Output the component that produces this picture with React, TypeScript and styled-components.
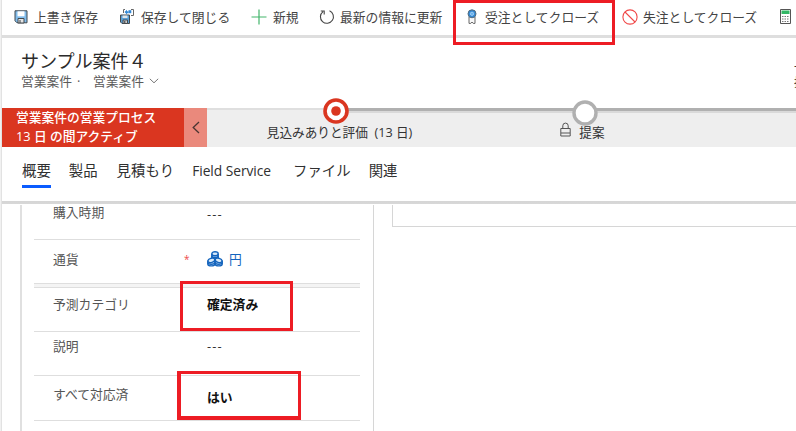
import React from 'react';
import styled, { createGlobalStyle } from 'styled-components';

const GlobalStyle = createGlobalStyle`
  * { box-sizing: border-box; }
  body {
    margin: 0;
    overflow: hidden;
    background: #fff;
    color: #333;
    font-family: "Open Sans", "Noto Sans CJK JP", sans-serif;
  }
`;

const Page = styled.div`
  position: relative;
  width: 796px;
  height: 431px;
  overflow: hidden;
  display: flex;
  flex-direction: column;
  padding-left: 2px;
  background: linear-gradient(90deg, #f1f1f1 0 1px, #e2e2e2 1px 2px, #fff 2px);
`;

const Toolbar = styled.div`
  display: flex;
  flex: none;
  height: 38px;
  padding-left: 12px;
  border-bottom: 3px solid #dedede;
`;

const Command = styled.div<{ $width: number; $gap: number }>`
  display: flex;
  flex: none;
  align-items: center;
  width: ${(p) => p.$width}px;
  height: 33px;
  gap: ${(p) => p.$gap}px;
  font-size: 12.8px;
  line-height: 18px;
  white-space: nowrap;
  color: #444;
  svg { flex: none; display: block; }
`;

const Header = styled.div`
  display: flex;
  flex: none;
  justify-content: space-between;
  height: 70px;
  padding: 11px 0 0 19px;
`;

const Title = styled.div`
  height: 24px;
  font-size: 18.1px;
  line-height: 24px;
  letter-spacing: -0.1px;
  white-space: nowrap;
  color: #2b2b2b;
`;

const Subtitle = styled.div`
  display: flex;
  align-items: center;
  height: 16px;
  font-size: 12.75px;
  line-height: 16px;
  white-space: nowrap;
  color: #5a5a5a;
  svg { margin-left: 5px; }
`;

const Dot = styled.span`
  width: 21px;
  padding-left: 5px;
`;

const ClippedText = styled.div`
  width: 2px;
  height: 32px;
  margin-top: 8px;
  overflow: hidden;
  font-size: 12px;
  line-height: 17px;
  white-space: nowrap;
`;

const Process = styled.div`
  display: flex;
  flex: none;
  height: 39px;
  background: #eee;
`;

const ProcessName = styled.div`
  flex: none;
  width: 182px;
  padding: 0 0 0 14px;
  background: #da3620;
  color: #fff;
  font-size: 12.75px;
  font-weight: 500;
  line-height: 19px;
  white-space: nowrap;
`;

const Collapse = styled.div`
  display: flex;
  flex: none;
  align-items: center;
  justify-content: center;
  width: 23px;
  background: #ea897c;
`;

const Stages = styled.div`
  flex: 1;
  display: flex;
  border-top: 2px solid #dfdfdf;
`;

const Stage = styled.div<{ $width: number; $tail?: number }>`
  position: relative;
  flex: none;
  display: flex;
  justify-content: center;
  width: ${(p) => p.$width}px;
  padding-top: 12px;
  font-size: 12.65px;
  line-height: 20px;
  white-space: nowrap;
  color: #333;
  &::after {
    content: "";
    position: absolute;
    top: -2px;
    left: 50%;
    width: ${(p) => p.$tail ?? 0}px;
    height: 5px;
    background: linear-gradient(#b0b0b0 0 3px, #d9d9d9 3px);
  }
`;

const StageMark = styled.svg<{ $top: number }>`
  position: absolute;
  z-index: 1;
  top: ${(p) => p.$top}px;
  left: 50%;
  margin-left: -13px;
`;

const StageText = styled.span<{ $gap?: number; $shift?: number }>`
  display: flex;
  gap: ${(p) => p.$gap ?? 0}px;
  height: 20px;
  transform: translateX(${(p) => p.$shift ?? 0}px);
`;

const Tabs = styled.div`
  display: flex;
  flex: none;
  height: 57px;
  padding: 13px 0 0 20px;
  border: solid transparent;
  border-width: 0 0 3px;
  border-image: linear-gradient(#ababab, #d8d8d8) 3;
`;

const Tab = styled.div<{ $gap: number; $active?: boolean; $tracking?: number }>`
  height: 28px;
  margin-right: ${(p) => p.$gap}px;
  border-bottom: ${(p) => (p.$active ? '3px solid #0b5cff' : 'none')};
  font-size: ${(p) => (p.$tracking ? 13.8 : 14.4)}px;
  line-height: 22px;
  letter-spacing: ${(p) => p.$tracking ?? 0}px;
  white-space: nowrap;
  color: #303030;
`;

const Content = styled.div`
  display: flex;
  flex: 1;
  align-items: flex-start;
  padding: 1px 0 0 18px;
`;

const Card = styled.div`
  width: 354px;
  height: 226px;
  padding: 0 13px 0 12px;
  border-left: 2px solid #e0e0e0;
  border-right: 1px solid #d6d6d6;
`;

const SidePanel = styled.div`
  flex: 1;
  height: 22px;
  margin-left: 18px;
  border-left: 1px solid #d6d6d6;
  border-bottom: 1px solid #d6d6d6;
`;

const Row = styled.div<{ $height: number; $top: number }>`
  display: grid;
  grid-template-columns: 131px 23px 1fr;
  height: ${(p) => p.$height}px;
  padding: ${(p) => p.$top}px 0 0 19px;
  border-bottom: 1px solid #dedede;
  font-size: 12.8px;
  line-height: 18px;
  white-space: nowrap;
  color: #555;
`;

const SectionGap = styled.div`
  height: 4px;
  background: #f4f4f4;
  border-bottom: 1px solid #dedede;
`;

const Label = styled.span<{ $lift?: number }>`
  margin-top: ${(p) => -(p.$lift ?? 0)}px;
`;

const Required = styled.span`
  color: #ed4949;
  font-size: 10px;
`;

const Value = styled.span<{ $strong?: boolean; $drop?: number; $tracking?: number }>`
  display: flex;
  align-items: center;
  gap: 6px;
  height: 18px;
  margin-top: ${(p) => p.$drop ?? 0}px;
  font-weight: ${(p) => (p.$strong ? 700 : 400)};
  letter-spacing: ${(p) => p.$tracking ?? 0}px;
  color: ${(p) => (p.$strong ? '#111' : '#333')};
`;

const Lookup = styled(Value)`
  color: #1464bd;
`;

const Highlight = styled.div<{ $x: number; $y: number; $w: number; $h: number; $edge?: string }>`
  position: absolute;
  z-index: 2;
  left: ${(p) => p.$x}px;
  top: ${(p) => p.$y}px;
  width: ${(p) => p.$w}px;
  height: ${(p) => p.$h}px;
  border: solid #ed1c24;
  border-width: ${(p) => p.$edge ?? '3px'};
`;

const SaveIcon = () => (
  <svg width="14" height="14" viewBox="0 0 14 14">
    <path d="M1 .8h12v12H3l-2-2z" fill="#82bdec" stroke="#41494f" />
    <path d="M3.500 1.300h7v5h-7z" fill="#fff" />
    <path d="M4 8.500h6V13H4z" fill="#e5e5e5" stroke="#41494f" />
    <path d="M6 10v3" stroke="#41494f" />
  </svg>
);

const SaveCloseIcon = () => (
  <svg width="16" height="17" viewBox="0 0 16 17">
    <path d="M6 1.500H4.500V5M12 1.500h2.500v6H12" fill="none" stroke="#666" />
    <path d="M5.500 4 8 1.800v1.400h1.500v2H8v1.400z" fill="#3288d5" />
    <path d="M9.500 2.200h2.800v3H9.500z" fill="#3288d5" />
    <path d="M1.500 7h9v8.500H3L1.500 14z" fill="#5a9fd5" stroke="#454b50" />
    <path d="M3.500 7.500h5V10h-5z" fill="#dfe5e9" />
    <path d="M4 12h4.500v3.500H4z" fill="#ccc" stroke="#454b50" />
    <path d="M5.800 13v2" stroke="#333" />
  </svg>
);

const PlusIcon = () => (
  <svg width="16" height="16" viewBox="0 0 16 16">
    <path d="M8 .5v15M.5 8h15" stroke="#43b56b" strokeWidth="1.200" />
  </svg>
);

const RefreshIcon = () => (
  <svg width="16" height="16" viewBox="0 0 16 16" fill="none" stroke="#454545" strokeWidth="1.100">
    <path d="M10.500 1.800a6.500 6.500 0 1 1-6.500.8M1.800 2h3.400v3.400" />
  </svg>
);

const AwardIcon = () => (
  <svg width="10" height="15" viewBox="0 0 10 15">
    <path d="M2 8v6.400h1.800L5 13l1.200 1.400H8V8" fill="#f8f8f8" stroke="#666" />
    <circle cx="5" cy="4.800" r="4" fill="#3288d5" stroke="#536b7c" />
    <circle cx="5" cy="4.800" r="1.700" fill="#68b2ef" stroke="#b9daf5" strokeWidth=".7" />
  </svg>
);

const BlockIcon = () => (
  <svg width="16" height="16" viewBox="0 0 16 16" fill="none" stroke="#f04848" strokeWidth="1.100">
    <circle cx="8" cy="8" r="7.100" />
    <path d="m3 3 10 10" />
  </svg>
);

const CalculatorIcon = () => (
  <svg width="11" height="15" viewBox="0 0 11 15">
    <path d="M.5.500h10v14H.500z" fill="#fff" stroke="#555" />
    <path d="M1.500 1.500h8v3.500h-8z" fill="#32b765" />
    <path d="M2 7.500h7M2 10h7M2 12.500h7" stroke="#777" strokeDasharray="1.500 1" />
  </svg>
);

const ChevronDown = () => (
  <svg width="10" height="6" viewBox="0 0 10 6" fill="none" stroke="#777">
    <path d="m.8.800 4.200 4 4.200-4" />
  </svg>
);

const ChevronLeft = () => (
  <svg width="8" height="13" viewBox="0 0 8 13" fill="none" stroke="#4a3532" strokeWidth="1.300">
    <path d="M7 1 1.200 6.500 7 12" />
  </svg>
);

const LockIcon = () => (
  <svg width="11" height="15" viewBox="0 0 11 15" fill="none" stroke="#555">
    <path d="M.8 6.500h9.400v7.500H.8zM2.800 6.500V3.800a2.700 2.700 0 0 1 5.400 0v2.700M1 11h9" />
  </svg>
);

const CoinsIcon = () => (
  <svg width="16" height="16" viewBox="0 0 16 16" fill="#d8eafa" stroke="#1464bd" strokeWidth="1.400">
    <path d="M4.800 3v6c0 2 6.400 2 6.400 0V3" />
    <ellipse cx="8" cy="2.800" rx="3.200" ry="2" />
    <path d="M4.800 5c0 2 6.400 2 6.400 0M4.800 7c0 2 6.400 2 6.400 0" fill="none" />
    <path d="M.8 9.500v3.500c0 2.500 7 2.500 7 0V9.500M8.200 9.500v3.500c0 2.500 7 2.500 7 0V9.500" />
    <ellipse cx="4.400" cy="9.300" rx="3.500" ry="2.100" transform="rotate(-18 4.400 9.300)" />
    <ellipse cx="11.600" cy="9.300" rx="3.500" ry="2.100" transform="rotate(18 11.600 9.300)" />
    <path d="M.8 11.300c0 2.500 7 2.500 7 0M8.200 11.300c0 2.500 7 2.500 7 0" fill="none" />
  </svg>
);

export default function App() {
  return (
    <>
      <GlobalStyle />
      <Page>
        <Toolbar>
          <Command $width={105} $gap={6}><SaveIcon />上書き保存</Command>
          <Command $width={132} $gap={6}><SaveCloseIcon />保存して閉じる</Command>
          <Command $width={68} $gap={6}><PlusIcon />新規</Command>
          <Command $width={148} $gap={5}><RefreshIcon />最新の情報に更新</Command>
          <Command $width={155} $gap={8}><AwardIcon />受注としてクローズ</Command>
          <Command $width={158} $gap={5}><BlockIcon />失注としてクローズ</Command>
          <Command $width={20} $gap={0}><CalculatorIcon /></Command>
        </Toolbar>
        <Header>
          <div>
            <Title>サンプル案件４</Title>
            <Subtitle>営業案件<Dot>·</Dot>営業案件<ChevronDown /></Subtitle>
          </div>
          <ClippedText>-<br />推定</ClippedText>
        </Header>
        <Process>
          <ProcessName>営業案件の営業プロセス<br />13 日 の間アクティブ</ProcessName>
          <Collapse><ChevronLeft /></Collapse>
          <Stages>
            <Stage $width={257} $tail={461}>
              <StageMark $top={-12} width="26" height="26" viewBox="0 0 26 26">
                <circle cx="13" cy="13" r="11" fill="#fff" stroke="#da3620" strokeWidth="3.600" />
                <circle cx="13" cy="13" r="4.800" fill="#da3620" />
              </StageMark>
              <StageText $shift={4}>見込みありと評価&nbsp; (13 日)</StageText>
            </Stage>
            <Stage $width={241}>
              <StageMark $top={-10} width="26" height="26" viewBox="0 0 26 26">
                <circle cx="13" cy="13" r="11" fill="#fff" stroke="#b0b0b0" strokeWidth="3.400" />
              </StageMark>
              <StageText $gap={8} $shift={-2}><LockIcon />提案</StageText>
            </Stage>
          </Stages>
        </Process>
        <Tabs>
          <Tab $gap={18} $active>概要</Tab>
          <Tab $gap={19}>製品</Tab>
          <Tab $gap={18}>見積もり</Tab>
          <Tab $gap={22} $tracking={-0.05}>Field Service</Tab>
          <Tab $gap={18}>ファイル</Tab>
          <Tab $gap={0}>関連</Tab>
        </Tabs>
        <Content>
          <Card>
            <Row $height={35} $top={0}><Label $lift={2}>購入時期</Label><span /><Value $tracking={1.1}>---</Value></Row>
            <Row $height={44} $top={10}>
              <Label>通貨</Label><Required>*</Required>
              <Lookup><CoinsIcon />円</Lookup>
            </Row>
            <SectionGap />
            <Row $height={44} $top={7}><Label>予測カテゴリ</Label><span /><Value $strong>確定済み</Value></Row>
            <Row $height={44} $top={5}><Label>説明</Label><span /><Value $tracking={1.1}>---</Value></Row>
            <Row $height={45} $top={9}><Label>すべて対応済</Label><span /><Value $strong $drop={3}>はい</Value></Row>
          </Card>
          <SidePanel />
        </Content>
        <Highlight $x={453} $y={0} $w={162} $h={45} />
        <Highlight $x={180} $y={281} $w={113} $h={50} />
        <Highlight $x={177} $y={371} $w={124} $h={49} $edge="3px 3px 4px 4px" />
      </Page>
    </>
  );
}
